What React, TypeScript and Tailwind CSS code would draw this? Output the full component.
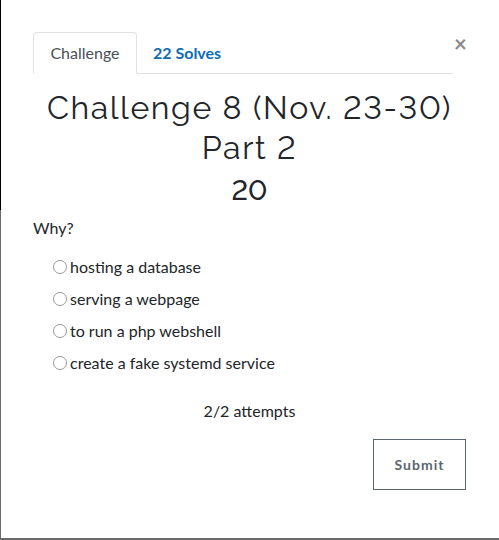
import { useState } from 'react';

const options = [
  'hosting a database',
  'serving a webpage',
  'to run a php webshell',
  'create a fake systemd service',
];

export default function App() {
  const [picked, setPicked] = useState<number | null>(null);

  return (
    <div className="relative flex h-[540px] w-[499px] overflow-hidden bg-white font-['Lato','Liberation_Sans',sans-serif] text-[#212529]">
      {/* backdrop edge */}
      <div className="flex w-px flex-col">
        <div className="h-[210px] bg-black" />
        <div className="flex-1 bg-[#6b6b6b]" />
      </div>

      <div className="relative flex-1 border-b-2 border-[#6b6b6b]">
        <button className="absolute left-[453px] top-[33px] text-[22px] font-bold leading-none text-[#8a8a8a]">×</button>

        <div className="w-[433px] pl-8 pt-8" style={{ boxSizing: 'content-box' }}>
          {/* tabs */}
          <div className="flex w-[420px] border-b border-[#dee2e6]">
            <div className="-mb-px flex h-[42px] w-[104px] items-center justify-center rounded-t border border-[#dee2e6] border-b-white bg-white text-[16px] text-[#495057]">
              Challenge
            </div>
            <div className="flex h-[41px] items-center px-4 text-[16px] font-bold text-[#0c6cb4]">22 Solves</div>
          </div>

          {/* heading */}
          <h2 className="mt-[14px] text-center font-['Raleway','Open_Sans',sans-serif] text-[32px] font-normal leading-[40px] tracking-[1.6px] text-[#212529] lining-nums">
            Challenge 8 (Nov. 23-30)
            <br />
            Part 2
          </h2>
          <h3 className="mt-[6px] text-center font-['Raleway','Open_Sans',sans-serif] text-[28px] font-medium leading-[34px] text-[#212529] lining-nums">20</h3>

          <p className="mt-[8px] text-[16px] leading-6">Why?</p>

          <div className="mt-[16px] flex flex-col gap-[11px] pl-5">
            {options.map((opt, i) => (
              <label key={opt} className="flex h-[21px] items-center text-[16px]" onClick={() => setPicked(i)}>
                <span className="mr-[3px] h-[14px] w-[14px] rounded-full border border-[#9a9a9a] bg-white">
                  {picked === i && <span className="m-[3px] block h-[6px] w-[6px] rounded-full bg-[#333]" />}
                </span>
                {opt}
              </label>
            ))}
          </div>

          <p className="mt-[26px] text-center text-[16px] leading-6">2/2 attempts</p>

          <div className="mt-[16px] flex justify-end">
            <button className="h-[51px] w-[93px] border border-[#5c666e] text-[14px] font-bold tracking-[1px] text-[#5c666e]">
              Submit
            </button>
          </div>
        </div>
      </div>
    </div>
  );
}
